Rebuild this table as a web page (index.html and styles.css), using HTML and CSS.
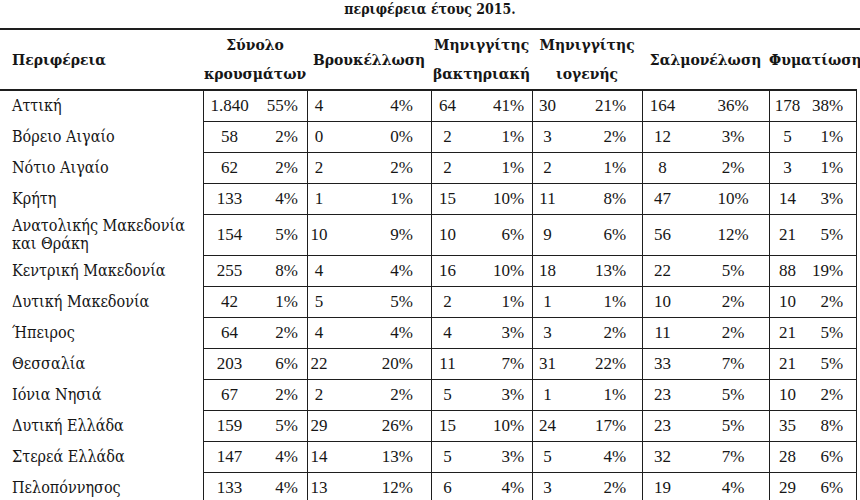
FILE: index.html
```html
<!DOCTYPE html>
<html lang="el">
<head>
<meta charset="utf-8">
<title>Κρούσματα ανά περιφέρεια 2015</title>
<link rel="stylesheet" href="styles.css">
</head>
<body>
<div class="caption">περιφέρεια έτους 2015.</div>
<div class="sheet">
<table class="stats">
<colgroup>
<col class="w-region">
<col class="w52"><col class="w52">
<col class="w23"><col class="w101">
<col class="w32"><col class="w69">
<col class="w30"><col class="w80">
<col class="w40"><col class="w87">
<col class="w36"><col class="w52">
</colgroup>
<thead>
<tr>
<th class="h-region">Περιφέρεια</th>
<th colspan="2">Σύνολο<br>κρουσμάτων</th>
<th colspan="2">Βρουκέλλωση</th>
<th colspan="2">Μηνιγγίτης<br>βακτηριακή</th>
<th colspan="2">Μηνιγγίτης<br>ιογενής</th>
<th colspan="2">Σαλμονέλωση</th>
<th colspan="2">Φυματίωση</th>
</tr>
</thead>
<tbody>
<tr><td>Αττική</td><td>1.840</td><td>55%</td><td>4</td><td>4%</td><td>64</td><td>41%</td><td>30</td><td>21%</td><td>164</td><td>36%</td><td>178</td><td>38%</td></tr>
<tr><td>Βόρειο Αιγαίο</td><td>58</td><td>2%</td><td>0</td><td>0%</td><td>2</td><td>1%</td><td>3</td><td>2%</td><td>12</td><td>3%</td><td>5</td><td>1%</td></tr>
<tr><td>Νότιο Αιγαίο</td><td>62</td><td>2%</td><td>2</td><td>2%</td><td>2</td><td>1%</td><td>2</td><td>1%</td><td>8</td><td>2%</td><td>3</td><td>1%</td></tr>
<tr><td>Κρήτη</td><td>133</td><td>4%</td><td>1</td><td>1%</td><td>15</td><td>10%</td><td>11</td><td>8%</td><td>47</td><td>10%</td><td>14</td><td>3%</td></tr>
<tr><td>Ανατολικής Μακεδονία<br>και Θράκη</td><td>154</td><td>5%</td><td>10</td><td>9%</td><td>10</td><td>6%</td><td>9</td><td>6%</td><td>56</td><td>12%</td><td>21</td><td>5%</td></tr>
<tr><td>Κεντρική Μακεδονία</td><td>255</td><td>8%</td><td>4</td><td>4%</td><td>16</td><td>10%</td><td>18</td><td>13%</td><td>22</td><td>5%</td><td>88</td><td>19%</td></tr>
<tr><td>Δυτική Μακεδονία</td><td>42</td><td>1%</td><td>5</td><td>5%</td><td>2</td><td>1%</td><td>1</td><td>1%</td><td>10</td><td>2%</td><td>10</td><td>2%</td></tr>
<tr><td>Ήπειρος</td><td>64</td><td>2%</td><td>4</td><td>4%</td><td>4</td><td>3%</td><td>3</td><td>2%</td><td>11</td><td>2%</td><td>21</td><td>5%</td></tr>
<tr><td>Θεσσαλία</td><td>203</td><td>6%</td><td>22</td><td>20%</td><td>11</td><td>7%</td><td>31</td><td>22%</td><td>33</td><td>7%</td><td>21</td><td>5%</td></tr>
<tr><td>Ιόνια Νησιά</td><td>67</td><td>2%</td><td>2</td><td>2%</td><td>5</td><td>3%</td><td>1</td><td>1%</td><td>23</td><td>5%</td><td>10</td><td>2%</td></tr>
<tr><td>Δυτική Ελλάδα</td><td>159</td><td>5%</td><td>29</td><td>26%</td><td>15</td><td>10%</td><td>24</td><td>17%</td><td>23</td><td>5%</td><td>35</td><td>8%</td></tr>
<tr><td>Στερεά Ελλάδα</td><td>147</td><td>4%</td><td>14</td><td>13%</td><td>5</td><td>3%</td><td>5</td><td>4%</td><td>32</td><td>7%</td><td>28</td><td>6%</td></tr>
<tr><td>Πελοπόννησος</td><td>133</td><td>4%</td><td>13</td><td>12%</td><td>6</td><td>4%</td><td>3</td><td>2%</td><td>19</td><td>4%</td><td>29</td><td>6%</td></tr>
</tbody>
</table>
</div>
</body>
</html>
```

FILE: styles.css
```css
html, body {
  margin: 0;
  padding: 0;
  height: 500px;
  overflow: hidden;
  background: #ffffff;
}

body {
  font-family: "Liberation Serif", "Times New Roman", serif;
  color: #161616;
  width: 860px;
}

.caption {
  font-family: "DejaVu Serif Condensed", "DejaVu Serif", serif;
  height: 28px;
  line-height: 18px;
  font-size: 14px;
  font-weight: bold;
  text-align: center;
}

.sheet {
  border-top: 2px solid #1e1e1e;
  width: 860px;
}

.stats {
  table-layout: fixed;
  width: 857px;
  border-collapse: separate;
  border-spacing: 0;
  font-size: 17px;
}

.w-region { width: 203px; }
.w23 { width: 23px; }
.w30 { width: 30px; }
.w32 { width: 32px; }
.w36 { width: 36px; }
.w40 { width: 40px; }
.w52 { width: 52px; }
.w69 { width: 69px; }
.w80 { width: 80px; }
.w87 { width: 87px; }
.w101 { width: 101px; }

.stats th {
  font-family: "DejaVu Serif Condensed", "DejaVu Serif", serif;
  font-weight: bold;
  font-size: 15.5px;
  line-height: 29px;
  padding: 0 0 1px;
  text-align: center;
  vertical-align: middle;
  border-bottom: 2px solid #1e1e1e;
  white-space: nowrap;
}

.stats th.h-region {
  text-align: left;
  padding-left: 12px;
}

.stats td {
  padding: 6px 0;
  line-height: 18px;
  vertical-align: middle;
  border-bottom: 1px solid #1e1e1e;
  white-space: nowrap;
  text-align: center;
}

.stats td:first-child {
  font-family: "DejaVu Serif Condensed", "DejaVu Serif", serif;
  font-size: 16px;
  text-align: left;
  padding: 2px 0 3px 12px;
  border-bottom: none;
}

.stats td:nth-child(2),
.stats td:nth-child(4),
.stats td:nth-child(6),
.stats td:nth-child(8),
.stats td:nth-child(10),
.stats td:nth-child(12) {
  border-left: 1px solid #1e1e1e;
}

.stats td:nth-child(13) {
  border-right: 1px solid #1e1e1e;
}

.stats td:nth-child(3) { text-align: right; padding-right: 9px; }
.stats td:nth-child(5) { text-align: right; padding-right: 18px; }
.stats td:nth-child(7) { text-align: right; padding-right: 8px; }
.stats td:nth-child(9) { text-align: right; padding-right: 16px; }
.stats td:nth-child(11) { text-align: center; padding-left: 15px; }
.stats td:nth-child(13) { text-align: right; padding-right: 13px; }
```
